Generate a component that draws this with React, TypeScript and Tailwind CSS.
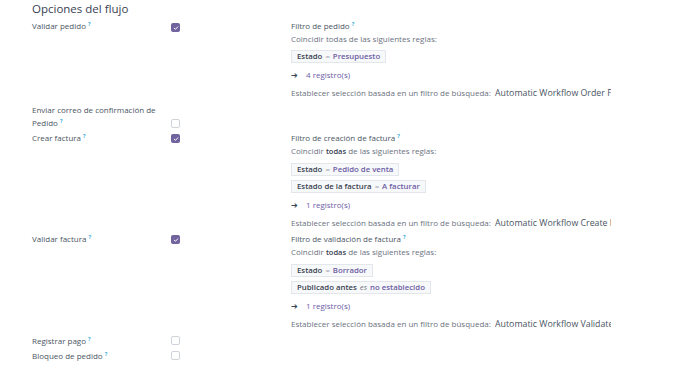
import type { ReactNode } from "react";

const purple = "text-[#6b5ca5]";

function Help() {
  return <sup className="ml-[2px] text-[5.5px] font-bold text-[#3fb0dc]">?</sup>;
}

function Check({ checked }: { checked: boolean }) {
  return checked ? (
    <span className="grid h-[9px] w-[9px] place-items-center rounded-[2px] bg-[#71639e]">
      <svg viewBox="0 0 10 10" className="h-[6px] w-[6px]">
        <path d="M2 5.2 4.1 7.2 8 3" fill="none" stroke="white" strokeWidth="1.6" strokeLinecap="round" strokeLinejoin="round" />
      </svg>
    </span>
  ) : (
    <span className="block h-[9px] w-[9px] rounded-[2px] border border-[#cfd4da] bg-white" />
  );
}

function Tag({ children }: { children: ReactNode }) {
  return (
    <div className="inline-flex h-[13px] items-center gap-[3px] border border-[#e3e6ea] bg-[#f7f8f9] px-[5px] text-[7.8px] text-[#374151]">
      {children}
    </div>
  );
}

function Row({
  label,
  checked,
  checkTop = 4,
  children,
  className = ""
}: {
  label: ReactNode;
  checked: boolean;
  checkTop?: number;
  children?: ReactNode;
  className?: string;
}) {
  return (
    <div className={`flex items-start ${className}`}>
      <div className="w-[130px] leading-[13px] text-[#4b5563]">{label}</div>
      <div className="ml-[9px] w-[9px]" style={{ marginTop: checkTop }}>
        <Check checked={checked} />
      </div>
      {children && <div className="ml-[111px] w-[320px] overflow-hidden whitespace-nowrap">{children}</div>}
    </div>
  );
}

function Filter({
  title,
  bold,
  tags,
  count,
  workflow
}: {
  title: string;
  bold: boolean;
  tags: ReactNode[];
  count: string;
  workflow: string;
}) {
  return (
    <div className="leading-[13px]">
      <div className="text-[#4b5563]">
        {title}
        <Help />
      </div>
      <div className="text-[#6b7280]">
        Coincidir {bold ? <span className="text-[7.5px] font-semibold text-[#374151]">todas</span> : "todas"} de las siguientes reglas:
      </div>
      <div className="mt-[5px] flex flex-col items-start gap-[4px]">
        {tags.map((t, i) => (
          <Tag key={i}>{t}</Tag>
        ))}
      </div>
      <div className="mt-[5px] flex items-center text-[#374151]">
        <span className="w-[15px] text-[8px]">➔</span>
        <span className={purple}>{count}</span>
      </div>
      <div className="mt-[5px] text-[#6b7280]">
        Establecer selección basada en un filtro de búsqueda:&nbsp; <span className="text-[8.8px] text-[#4b5563]">{workflow}</span>
      </div>
    </div>
  );
}

const eq = <span className="text-[#9ca3af]">=</span>;

export default function App() {
  return (
    <div className="h-[368px] w-[690px] bg-white pl-[32px] text-[8px]" style={{ fontFamily: "'Open Sans', 'Noto Sans', sans-serif" }}>
      <h2 className="pt-[2px] text-[11.5px] font-medium leading-[14px] text-[#374151]">Opciones del flujo</h2>
      <Row
        className="mt-[3px]"
        label={
          <>
            Validar pedido
            <Help />
          </>
        }
        checked
        checkTop={4}
      >
        <Filter
          title="Filtro de pedido"
          bold={false}
          tags={[
            <>
              <span className="font-semibold">Estado</span>
              {eq}
              <span className={`font-semibold ${purple}`}>Presupuesto</span>
            </>
          ]}
          count="4 registro(s)"
          workflow="Automatic Workflow Order Filter"
        />
      </Row>
      <Row
        className="mt-[3px]"
        label={
          <>
            Enviar correo de confirmación de Pedido
            <Help />
          </>
        }
        checked={false}
        checkTop={16}
      />
      <Row
        className="mt-[2px]"
        label={
          <>
            Crear factura
            <Help />
          </>
        }
        checked
        checkTop={3}
      >
        <Filter
          title="Filtro de creación de factura"
          bold
          tags={[
            <>
              <span className="font-semibold">Estado</span>
              {eq}
              <span className={`font-semibold ${purple}`}>Pedido de venta</span>
            </>,
            <>
              <span className="font-semibold">Estado de la factura</span>
              {eq}
              <span className={`font-semibold ${purple}`}>A facturar</span>
            </>
          ]}
          count="1 registro(s)"
          workflow="Automatic Workflow Create Invoice Filter"
        />
      </Row>
      <Row
        className="mt-[2px]"
        label={
          <>
            Validar factura
            <Help />
          </>
        }
        checked
        checkTop={3}
      >
        <Filter
          title="Filtro de validación de factura"
          bold
          tags={[
            <>
              <span className="font-semibold">Estado</span>
              {eq}
              <span className={`font-semibold ${purple}`}>Borrador</span>
            </>,
            <>
              <span className="font-semibold">Publicado antes</span>
              <i className="text-[#6b7280]">es</i>
              <span className={`font-semibold ${purple}`}>no establecido</span>
            </>
          ]}
          count="1 registro(s)"
          workflow="Automatic Workflow Validate Invoice Filter"
        />
      </Row>
      <Row
        className="mt-[3px]"
        label={
          <>
            Registrar pago
            <Help />
          </>
        }
        checked={false}
        checkTop={2}
      />
      <Row
        className="mt-[2px]"
        label={
          <>
            Bloqueo de pedido
            <Help />
          </>
        }
        checked={false}
        checkTop={2}
      />
    </div>
  );
}
